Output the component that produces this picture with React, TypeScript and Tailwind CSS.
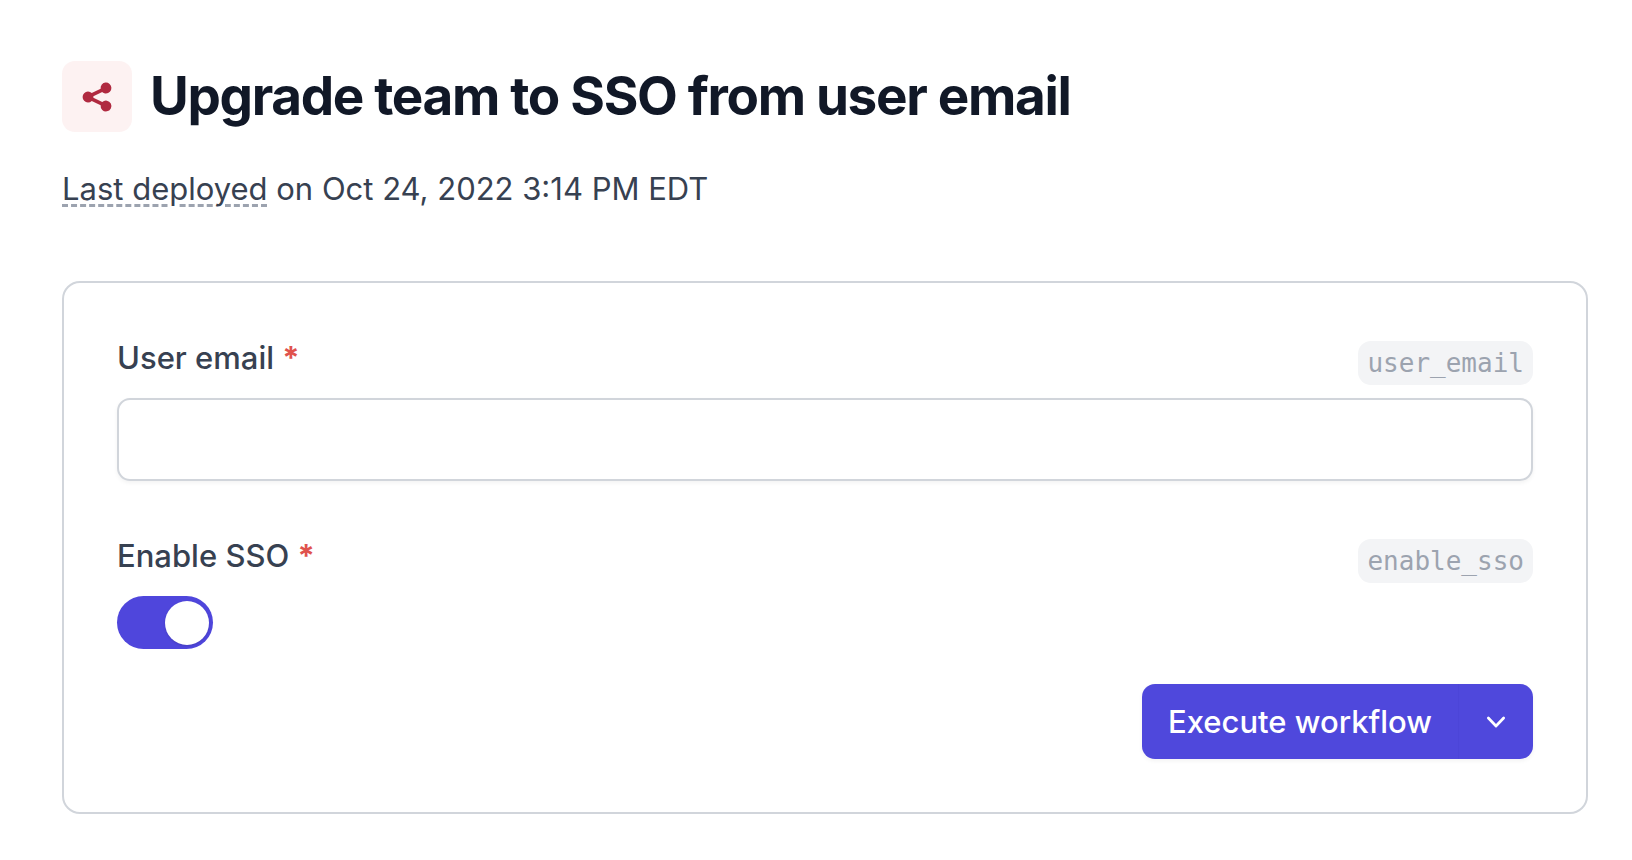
import { useState } from "react";
import type { ReactNode } from "react";

interface FieldHeaderProps {
  htmlFor: string;
  label: string;
  slug: string;
}

function ShareIcon() {
  return (
    <svg viewBox="0 0 20 20" fill="currentColor" className="size-9" aria-hidden>
      <path d="M15 8a3 3 0 10-2.977-2.63l-4.94 2.47a3 3 0 100 4.319l4.94 2.47a3 3 0 10.895-1.789l-4.94-2.47a3.027 3.027 0 000-.74l4.94-2.47C13.456 7.68 14.19 8 15 8z" />
    </svg>
  );
}

function ChevronDownIcon() {
  return (
    <svg viewBox="0 0 20 20" fill="currentColor" className="size-9" aria-hidden>
      <path d="M5.23 7.21a.75.75 0 011.06.02L10 11.168l3.71-3.938a.75.75 0 111.08 1.04l-4.25 4.5a.75.75 0 01-1.08 0l-4.25-4.5a.75.75 0 01.02-1.06z" />
    </svg>
  );
}

function FieldHeader({ htmlFor, label, slug }: FieldHeaderProps) {
  return (
    <div className="flex items-start justify-between pb-[13px]">
      <label
        htmlFor={htmlFor}
        className="text-[31px] leading-[44px] font-medium text-[#374151]"
      >
        {label} <span className="font-bold text-[#e0524d]">*</span>
      </label>
      <code className="mt-[5px] rounded-[13px] bg-[#f3f4f6] px-[9px] font-['DejaVu_Sans_Mono',monospace] text-[26px] leading-[44px] text-[#9ca3af]">
        {slug}
      </code>
    </div>
  );
}

function Field({ children, ...header }: FieldHeaderProps & { children: ReactNode }) {
  return (
    <div className="flex flex-col items-start">
      <div className="w-full">
        <FieldHeader {...header} />
      </div>
      {children}
    </div>
  );
}

export default function App() {
  const [email, setEmail] = useState("");
  const [enabled, setEnabled] = useState(true);

  return (
    <main className="min-h-screen bg-white pt-[61px] pr-11 pb-11 pl-[62px] font-['Inter',sans-serif]">
      <header>
        <div className="flex items-start gap-[18px]">
          <div className="flex h-[71px] w-[70px] shrink-0 items-center justify-center rounded-[13px] bg-[#fdf2f2] text-[#b02a40]">
            <ShareIcon />
          </div>
          <h1 className="text-[53px] leading-[70px] font-bold tracking-tight text-[#111827]">
            Upgrade team to SSO from user email
          </h1>
        </div>
        <p className="mt-[35px] text-[31px] leading-[44px] text-[#374151]">
          <span className="underline decoration-[#9ca3af] decoration-dashed decoration-[3px] underline-offset-4">
            Last deployed
          </span>{" "}
          on Oct 24, 2022 3:14 PM EDT
        </p>
      </header>

      <form
        className="mt-[70px] rounded-[18px] border-2 border-[#d1d5db] p-[53px]"
        onSubmit={(e) => e.preventDefault()}
      >
        <div className="flex flex-col gap-[53px]">
          <Field htmlFor="user_email" label="User email" slug="user_email">
            <input
              id="user_email"
              type="email"
              required
              value={email}
              onChange={(e) => setEmail(e.target.value)}
              className="h-[83px] w-full rounded-[13px] border-2 border-[#d1d5db] px-6 text-[31px] text-[#374151] shadow-[0_2px_4px_rgba(0,0,0,0.05)] outline-none focus:border-[#4f46e5]"
            />
          </Field>

          <Field htmlFor="enable_sso" label="Enable SSO" slug="enable_sso">
            <input
              id="enable_sso"
              type="checkbox"
              role="switch"
              checked={enabled}
              onChange={(e) => setEnabled(e.target.checked)}
              className="flex h-[53px] w-24 cursor-pointer appearance-none items-center rounded-full bg-[#e5e7eb] px-1 before:size-11 before:rounded-full before:bg-white before:shadow-sm checked:justify-end checked:bg-[#4f46dc]"
            />
          </Field>
        </div>

        <div className="mt-[35px] flex justify-end">
          <div className="flex h-[75px] overflow-hidden rounded-[13px] bg-[#4f48dc] text-white shadow-[0_2px_4px_rgba(0,0,0,0.05)]">
            <button
              type="submit"
              className="cursor-pointer border-r border-[#4c45d8] px-[26px] text-[31px] leading-[44px] font-medium"
            >
              Execute workflow
            </button>
            <button
              type="button"
              aria-label="More options"
              className="flex w-[74px] cursor-pointer items-center justify-center"
            >
              <ChevronDownIcon />
            </button>
          </div>
        </div>
      </form>
    </main>
  );
}
